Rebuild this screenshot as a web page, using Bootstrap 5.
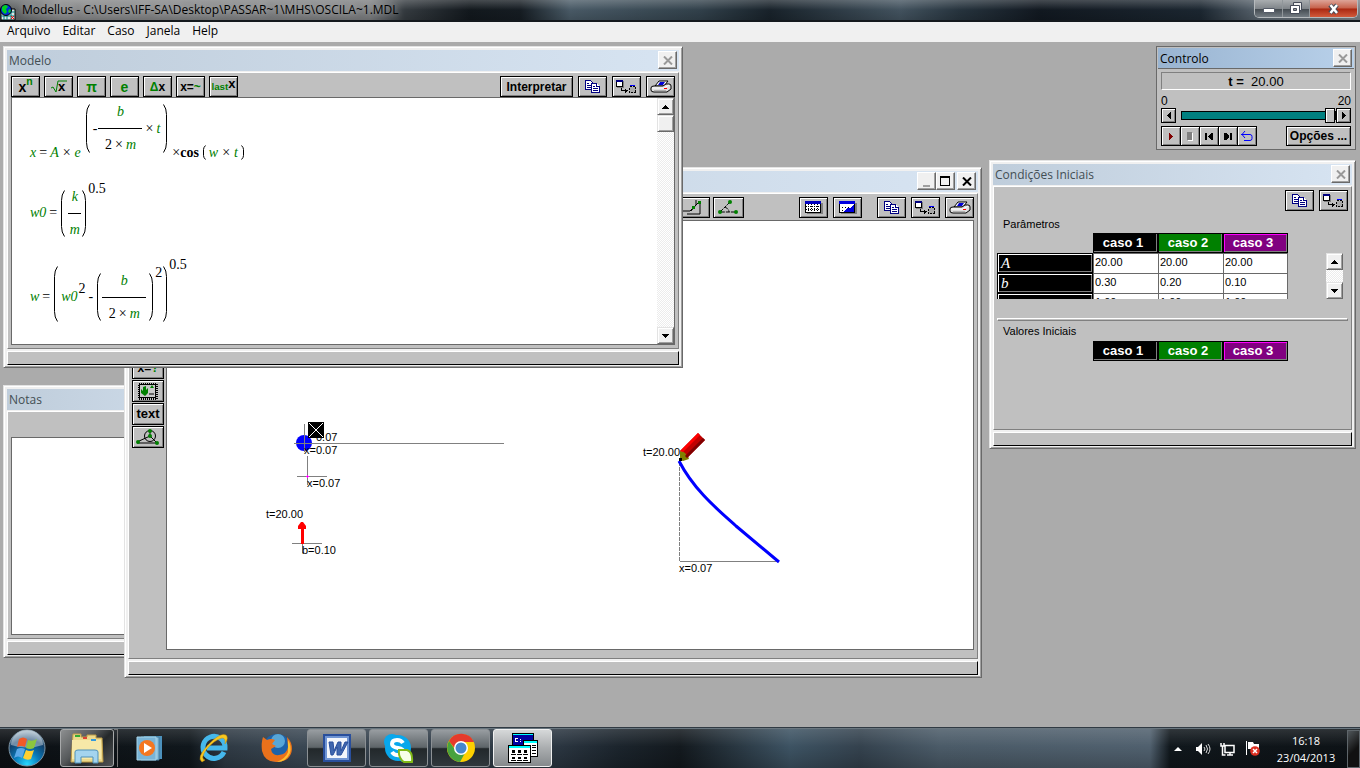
<!DOCTYPE html>
<html lang="pt">
<head>
<meta charset="utf-8">
<meta name="viewport" content="width=device-width, initial-scale=1">
<title>Modellus</title>
<link href="https://cdn.jsdelivr.net/npm/bootstrap@5.3.0/dist/css/bootstrap.min.css" rel="stylesheet">
<style>
:root{--ui:"Open Sans","Noto Sans",sans-serif;--face:#c0c0c0}
body{font-family:"Liberation Sans",Arial,sans-serif;font-size:11px;line-height:14px;color:#000;background:#ababab}
button{font:inherit;color:inherit;padding:0}
svg{display:block;flex:none}
.crisp{shape-rendering:crispEdges}
/* application frame */
.app-title{height:22px;font-family:var(--ui);border-bottom:2px solid #14191d;
 background:linear-gradient(#ffffff38,#0000 50%,#0002),linear-gradient(90deg,#55595b,#858687 60px,#7b7d7f 370px,#343a3f 405px,#12181d 470px,#151c22 520px,#485965 570px,#31404a 700px,#18222a 770px,#42525e 900px,#26333d 960px,#111820 1040px,#1b2630 1200px,#59646e 1260px,#7a8187)}
.app-name{font-size:12px;line-height:20px;margin-left:6px;text-shadow:0 0 6px #ffffff90}
.caption-group{height:18px;margin-right:2px;border:1px solid #b6babd;border-top:0;border-radius:0 0 5px 5px;overflow:hidden}
.caption-group button{width:28px;border:0;border-right:1px solid #90969a;background:linear-gradient(#a9adb0,#80858a 50%,#42494f 52%,#737b82)}
.caption-group .cap-max{width:27px}
.caption-group .cap-close{width:47px;border-right:0;background:linear-gradient(#dda498,#c6604a 48%,#a92711 52%,#d25a3b)}
.app-menu{height:20px;background:#f0f0f0;font-family:var(--ui);font-size:12px;line-height:18px;padding-left:7px;gap:12px}
.app-menu a{color:#000;text-decoration:none}
/* inner windows */
.win{position:absolute;padding:3px 3px 2px;background:#f0f0f0;border:1px solid;border-color:#e3e3e3 #696969 #696969 #e3e3e3;box-shadow:inset 1px 1px #fff,inset -1px -1px #a0a0a0}
.win-bar{height:21px;padding-left:2px;background:linear-gradient(90deg,#bfcddb,#d7e4f2);font-family:var(--ui);font-size:12px;line-height:21px;color:#434e54}
.win-bar button{width:19px;height:18px;margin:1px 2px 0 0;color:#999;background:#f0f0f0;border:1px solid;border-color:#fff #696969 #696969 #fff;box-shadow:inset -1px -1px #a0a0a0}
.w-anim .win-bar button{color:#000}
.win-body{background:var(--face);border:1px solid;border-color:#fff #808080 #808080 #fff;margin-top:1px;padding:3px;min-height:0}
.win-status{height:14px;margin-top:2px;background:var(--face);border:1px solid;border-color:#fff #000 #000 #fff}
.sheet{background:#fff;border:1px solid #696969;min-height:0}
.w-modelo{left:3px;top:4px;width:680px;height:322px;z-index:3}
.w-notas{left:3px;top:343px;width:300px;height:273px}
.w-notas textarea{margin-top:22px;resize:none}
.w-anim{left:124px;top:125px;width:858px;height:511px;z-index:2}
.w-anim .win-body{padding-bottom:8px}
.w-cond{right:4px;top:118px;width:367px;height:289px}
.w-ctl{right:4px;top:4px;width:200px;height:104px;padding:1px;background:var(--face);border:1px solid #696969;box-shadow:none}
.w-ctl .win-bar{color:#000;background:linear-gradient(90deg,#99b4d1,#b9d1ea);border-bottom:1px solid #696969}
/* push buttons */
.tb{display:flex;align-items:center;justify-content:center;width:29px;height:21px;background:var(--face);border:1px solid #000;border-radius:0;box-shadow:inset 1px 1px #fff,inset -1px -1px #808080;font-size:12px;font-weight:700;white-space:nowrap}
.tb-wide{width:31px}
.tb-math{font-size:14px}
.tb-last{align-items:baseline;font-size:13px}
.tools{gap:5px}
.palette .tb{width:32px;height:22px}
.palette{gap:1px;padding-top:137px;margin-right:2px;overflow:hidden}
.grn{color:#008000}
.interp{width:73px}
/* scroll bars */
.sbar{width:17px;background:repeating-conic-gradient(#fff 0 25%,#ececec 0 50%) 0 0/2px 2px}
.sbar button{width:17px;height:17px;display:flex;align-items:center;justify-content:center;background:#f0f0f0;border:1px solid;border-color:#e3e3e3 #696969 #696969 #e3e3e3;box-shadow:inset 1px 1px #fff,inset -1px -1px #a0a0a0}
/* equations */
.maths{font-family:"Liberation Serif",serif;font-size:14px;line-height:16px;padding-left:18px;height:246px;overflow:hidden}
.eq{display:flex;gap:3px}
.eq i{color:#008000}
.op{margin:0 1px}
.tight{margin-left:-2px}
.frac{display:flex;flex-direction:column;align-items:center;width:44px}
.frac>span:first-child{width:100%;text-align:center;padding-bottom:8px;border-bottom:1px solid #000}
.frac>span:last-child{display:flex;gap:3px;padding-top:8px}
.frac-s{width:13px}
.paren{stroke:#000;fill:none}
.tall{margin-bottom:6px}
.pow{padding-bottom:48px}
.pow-lo{padding-bottom:16px}
.pow-hi{padding-bottom:64px}
/* control panel */
.ctl-pad{padding:3px}
.t-box{height:18px;border:1px solid;border-color:#808080 #fff #fff #808080;font-size:13px;line-height:17px}
.scale-ends{font-size:12px;line-height:13px;margin-top:5px}
.ctl-btn{width:15px;height:15px}
.t-range{appearance:none;-webkit-appearance:none;flex:1;min-width:0;height:15px;margin:0 0 0 5px;background:none}
.t-range::-webkit-slider-runnable-track{height:9px;background:#008080;border:1px solid #000}
.t-range::-webkit-slider-thumb{-webkit-appearance:none;width:10px;height:15px;margin-top:-4px;background:var(--face);border:1px solid #000;box-shadow:inset 1px 1px #fff}
.play{padding-top:3px}
.play .tb{width:20px;height:20px;margin-right:-1px}
.play .opts{width:65px;margin:0 0 0 auto}
/* case tables */
.cases{border-collapse:separate;border-spacing:0;table-layout:fixed;margin:0}
.cases th,.cases td{padding:0;font-weight:400}
.cases thead th{height:20px;width:65px;font-weight:700;font-size:13px;text-align:center;padding-right:5px;color:#fff;border:1px solid #000}
.cases .lead-col{width:96px;border:0;background:none}
.c1{background:#000;box-shadow:inset -1px -1px #808080}
.c2{background:#008000;box-shadow:inset -1px -1px #808080}
.c3{background:#800080;box-shadow:inset 1px 1px #f0f,inset -1px -1px #808080}
.cases tbody th{height:20px;background:#000;color:#fff;font:italic 15px/17px "Liberation Serif",serif;border:1px solid #000;box-shadow:inset 1px 1px #fff,inset -1px -1px #808080;padding-left:3px}
.cases tbody td{background:#fff;border:solid #696969;border-width:1px 0 0 1px;padding-left:1px;vertical-align:top;line-height:16px}
.cases tbody td:last-child{border-right-width:1px}
.clip{height:66px;overflow:hidden}
.scroll-sm{height:46px;margin-top:20px;margin-right:5px}
.etch{height:3px;margin-top:19px;border:1px solid;border-color:#fff #808080 #808080 #fff}
.lbl-a{padding:6px 0 2px 6px}
.lbl-b{padding:3px 0 3px 6px}
/* taskbar */
.task{height:40px;color:#fff;font-family:var(--ui);border-top:1px solid #69767f;box-shadow:0 -1px #303a43;z-index:5;
 background:linear-gradient(#ffffff22,#0000 45%,#0003),linear-gradient(90deg,#0c1014,#10171c 190px,#2f3a44 225px,#3a4753 300px,#2a3540 560px,#1b242c 620px,#13191e 680px,#3d5363 790px,#34424e 860px,#4b5b68 940px,#50606e 1150px,#10171c 1170px,#0d1216)}
.task button{display:flex;align-items:center;justify-content:center;height:38px;background:none;border:0}
.task .orb{width:53px}
.task .run{width:59px;margin-right:3px;border:1px solid #8b9094;border-radius:3px;background:linear-gradient(#989da1,#5e6569 48%,#22282b 52%,#30383d)}
.task .explorer{width:54px;margin-left:7px;margin-right:0;background:linear-gradient(135deg,#8d8f90,#55585a 40%,#24282a 60%,#515456);border-color:#a7a9aa}
.task .active{background:linear-gradient(#d6d8d9,#aaadaf 50%,#85898c);border-color:#f0f0f0}
.task .pin{width:63px}
.stack-edge{width:4px;height:38px;border-right:1px solid #777;border-top:1px solid #777}
.task .tray{width:25px}
.clock{font-size:11px;line-height:17px;width:74px}
.task .peek{width:13px;border:1px solid #5f666b;background:linear-gradient(135deg,#50565a,#111 55%)}
</style>
</head>
<body class="vh-100 d-flex flex-column overflow-hidden">

<svg width="0" height="0" class="position-absolute" aria-hidden="true">
 <symbol id="i-copy" viewBox="0 0 15 13"><g class="crisp" fill="#fff" stroke="#000080"><path d="M.5.5h5l2 2v7h-7z"/><path d="M2 3.500h2M2 5.500h4M2 7.500h4"/><path d="M6.500 3.500h5l3 3v6h-8z"/><path d="M11.500 3.500v3h3M8 6.500h2M8 8.500h5M8 10.500h5"/></g></symbol>
 <symbol id="i-send" viewBox="0 0 21 13"><g class="crisp"><path d="M1 1h7v7H1z" fill="#808080"/><path d="M.5.5h6v6h-6z" fill="#fff" stroke="#000"/><path d="M0 0h7v2H0z" fill="#000080"/><path d="M5.500 8v2.500h6M9.500 8.500v4M10.500 9.500v2" stroke="#000" fill="none"/><path d="M13.500 6.500h6v6h-6z" fill="#aaa" stroke="#000" stroke-dasharray="2 1"/><path d="M14 5h5v1h-5z" fill="#00f"/></g></symbol>
 <symbol id="i-print" viewBox="0 0 22 13"><path d="M9 1h9l-4 5H5z" fill="#fff" stroke="#000"/><path d="M10 2h5l-2 3H8z" fill="#0000d8"/><path d="M1 8q0-2 3-2h9l3-2h3q2 0 2 2v3l-4 3H4q-3 0-3-2z" fill="#e0e0e0" stroke="#000"/><path d="M2 8h12l5-3" stroke="#fff" fill="none"/><path d="M14 8h3v1h-3z" fill="red"/><path d="M4 11h12" stroke="#808080"/></symbol>
 <symbol id="i-x" viewBox="0 0 10 9"><path d="M1 .5l8 8M9 .5l-8 8" stroke="currentColor" stroke-width="2"/></symbol>
 <symbol id="i-up" viewBox="0 0 7 4"><path class="crisp" d="M3 0h1v1h1v1h1v1h1v1H0V3h1V2h1V1h1z"/></symbol>
 <symbol id="i-down" viewBox="0 0 7 4"><path class="crisp" d="M0 0h7v1H6v1H5v1H4v1H3V3H2V2H1V1H0z"/></symbol>
 <symbol id="i-left" viewBox="0 0 4 7"><path class="crisp" d="M4 0v7H3V6H2V5H1V4H0V3h1V2h1V1h1V0z"/></symbol>
 <symbol id="i-right" viewBox="0 0 4 7"><path class="crisp" d="M0 0v7h1V6h1V5h1V4h1V3H3V2H2V1H1V0z"/></symbol>
</svg>

<header class="app-title d-flex flex-shrink-0">
 <svg width="16" height="17" viewBox="0 0 16 17" class="mt-1"><path d="M1 5h14v11H1z" fill="#d8e8e8" stroke="#000"/><path d="M1 12h14M8 8h7M11 5v11M7 12v4M4 12v4" stroke="#008080"/><circle cx="6" cy="6" r="5.500" fill="#0030d8" stroke="#000"/><path d="M2 3q4-4 6 0l-2 2 1 3-2 2-3-3zM9 5l2 1-1 3-2-1z" fill="#00d020"/><path d="M11 12l3 3m0-3l-3 3" stroke="red"/></svg>
 <div class="app-name flex-grow-1 text-nowrap">Modellus - C:\Users\IFF-SA\Desktop\PASSAR~1\MHS\OSCILA~1.MDL</div>
 <div class="caption-group d-flex">
  <button aria-label="Minimizar"><svg class="mx-auto" width="12" height="12"><path d="M.5 5.500h11v4H.5z" fill="#fff" stroke="#555b68"/></svg></button>
  <button class="cap-max" aria-label="Restaurar"><svg class="mx-auto" width="13" height="13"><path d="M3.500.5h8v8h-8z" fill="#eee" stroke="#454b58"/><path d="M.5 3.500h9v8h-9z" fill="#fff" stroke="#454b58"/><path d="M3.500 6.500h3v2h-3z" fill="#999" stroke="#454b58"/></svg></button>
  <button class="cap-close" aria-label="Fechar"><svg class="mx-auto" width="14" height="12"><path d="M3 2l7 8M10 2l-7 8" stroke="#454b58" stroke-width="4.500"/><path d="M3.500 2l6.500 8M10 2l-6.500 8" stroke="#fff" stroke-width="2.500"/></svg></button>
 </div>
</header>
<nav class="app-menu d-flex flex-shrink-0"><a href="#">Arquivo</a><a href="#">Editar</a><a href="#">Caso</a><a href="#">Janela</a><a href="#">Help</a></nav>

<main class="position-relative flex-grow-1 overflow-hidden">

<section class="win w-modelo d-flex flex-column">
 <div class="win-bar d-flex"><span class="flex-grow-1">Modelo</span><button aria-label="Fechar"><svg class="mx-auto" width="10" height="9"><use href="#i-x"/></svg></button></div>
 <div class="win-body flex-grow-1 d-flex flex-column">
  <div class="d-flex justify-content-between pb-px">
   <div class="d-flex gap-1">
    <button class="tb tb-math">x<sup class="grn">n</sup></button>
    <button class="tb" aria-label="raiz"><svg width="18" height="13"><path d="M1 8l2-1 3 5L8 1h9" fill="none" stroke="#008000"/><text x="8" y="11" font-size="13" font-weight="700">x</text></svg></button>
    <button class="tb tb-math grn">π</button>
    <button class="tb tb-math grn">e</button>
    <button class="tb"><span class="grn">Δ</span>x</button>
    <button class="tb">x=<span class="grn">~</span></button>
    <button class="tb tb-last"><sub class="grn">last</sub>x</button>
   </div>
   <div class="d-flex tools">
    <button class="tb interp">Interpretar</button>
    <button class="tb" aria-label="Copiar"><svg width="15" height="13"><use href="#i-copy"/></svg></button>
    <button class="tb" aria-label="Enviar"><svg width="21" height="13"><use href="#i-send"/></svg></button>
    <button class="tb" aria-label="Imprimir"><svg width="22" height="13"><use href="#i-print"/></svg></button>
   </div>
  </div>
  <div class="sheet d-flex flex-grow-1">
   <div class="maths flex-grow-1">
    <div class="eq align-items-end" style="padding-top:6px">
     <i>x</i>=<i>A</i><span class="op">×</span><i>e</i>
     <div class="eq align-items-center ps-px" style="padding:0 1px 8px">
      <svg class="paren" width="5" height="49"><path d="M4.500.5q-3 4-3 10v28q0 6 3 10"/></svg>
      <span>-</span><span class="frac tight"><span><i>b</i></span><span><span>2</span><span>×</span><i>m</i></span></span>×<i>t</i>
      <svg class="paren" width="5" height="49"><path d="M.5.5q3 4 3 10v28q0 6-3 10"/></svg>
     </div>
     <span>×<b>cos</b></span>
     <svg class="paren" width="4" height="16"><path d="M3.500.5q-2 2-2 4v6q0 2 2 4"/></svg><i>w</i><span class="op">×</span><i>t</i><svg class="paren" width="4" height="16"><path d="M.5.5q2 2 2 4v6q0 2-2 4"/></svg>
    </div>
    <div class="eq align-items-center" style="padding-top:20px">
     <i>w0</i>=
     <svg class="paren" width="5" height="47"><path d="M4.500.5q-3 4-3 10v26q0 6 3 10"/></svg>
     <span class="frac frac-s"><span><i>k</i></span><span><i>m</i></span></span>
     <svg class="paren tight" width="5" height="47"><path d="M.5.5q3 4 3 10v26q0 6-3 10"/></svg>
     <span class="pow tight">0.5</span>
    </div>
    <div class="eq align-items-center" style="padding-top:12px">
     <i>w</i>=
     <svg class="paren tall" width="5" height="56"><path d="M4.500.5q-3 4-3 10v35q0 6 3 10"/></svg>
     <i>w0</i><span class="pow-lo tight">2</span><span>-</span>
     <svg class="paren" width="5" height="48"><path d="M4.500.5q-3 4-3 10v27q0 6 3 10"/></svg>
     <span class="frac tight"><span><i>b</i></span><span><span>2</span><span>×</span><i>m</i></span></span>
     <svg class="paren" width="5" height="48"><path d="M.5.5q3 4 3 10v27q0 6-3 10"/></svg>
     <span class="pow tight">2</span>
     <svg class="paren tall tight" width="5" height="56"><path d="M.5.5q3 4 3 10v35q0 6-3 10"/></svg>
     <span class="pow-hi tight">0.5</span>
    </div>
    <div class="eq" style="padding:5px 0 0 94px"><i>b</i></div>
   </div>
   <div class="sbar d-flex flex-column">
    <button aria-label="Subir"><svg width="7" height="4"><use href="#i-up"/></svg></button><button aria-label="Posição"></button>
    <button class="mt-auto" aria-label="Descer"><svg width="7" height="4"><use href="#i-down"/></svg></button>
   </div>
  </div>
 </div>
 <div class="win-status"></div>
</section>

<section class="win w-notas d-flex flex-column">
 <div class="win-bar"><label for="notas">Notas</label></div>
 <div class="win-body flex-grow-1 d-flex"><textarea id="notas" class="sheet flex-grow-1"></textarea></div>
 <div class="win-status"></div>
</section>

<section class="win w-anim d-flex flex-column">
 <div class="win-bar d-flex justify-content-end">
  <button class="me-0" aria-label="Minimizar"><svg width="17" height="14"><path d="M5 12h7" stroke="#a0a0a0" stroke-width="2"/></svg></button>
  <button aria-label="Maximizar"><svg width="17" height="16"><path class="crisp" d="M3.500 3.500h9v9h-9zM3 4.500h10" fill="none" stroke="#000"/></svg></button>
  <button aria-label="Fechar"><svg class="mx-auto" width="10" height="9"><use href="#i-x"/></svg></button>
 </div>
 <div class="win-body flex-grow-1 d-flex flex-column">
  <div class="d-flex justify-content-end tools" style="padding-bottom:2px">
   <button class="tb tb-wide" aria-label="Declive" style="margin-right:-2px"><svg width="25" height="16"><path d="M1 11h7l9-9M18 2v12H5M9 11l5-6V0" fill="none" stroke="#000"/><path d="M16 1h3v3h-3zM10 6h3v3h-3z" fill="#008000"/></svg></button>
   <button class="tb tb-wide" aria-label="Ângulo" style="margin-right:50px"><svg width="21" height="15"><path d="M12 2L2 12h16M7 7q4 2 4 5" fill="none" stroke="#000" stroke-dasharray="4 1"/><g fill="#008000"><circle cx="12" cy="2" r="2"/><circle cx="2" cy="12" r="2"/><circle cx="18" cy="12" r="2"/></g></svg></button>
   <button class="tb" aria-label="Tabela"><svg width="18" height="13" class="crisp"><path d="M2 2h16v11H2z" fill="#808080"/><path d="M.5.5h15v11H.5z" fill="#fff" stroke="#000"/><path d="M1 5.500h14M1 8.500h14M3.500 3v9M6.500 3v9M9.500 3v9M12.500 3v9" stroke="#000" stroke-dasharray="1 1"/><path d="M0 0h16v3H0z" fill="#0000c0"/></svg></button>
   <button class="tb" aria-label="Gráfico" style="margin-right:10px"><svg width="18" height="13" class="crisp"><path d="M2 2h16v11H2z" fill="#808080"/><path d="M.5.5h15v11H.5z" fill="#fff" stroke="#000"/><path d="M3 6h1M6 6h1M3 9h1M9 6h1" stroke="#000"/><path d="M0 0h16v3H0zM4 11l5-4h3l3-4v8z" fill="#0000e0"/></svg></button>
   <button class="tb" aria-label="Copiar"><svg width="15" height="13"><use href="#i-copy"/></svg></button>
   <button class="tb" aria-label="Enviar"><svg width="21" height="13"><use href="#i-send"/></svg></button>
   <button class="tb" aria-label="Imprimir"><svg width="22" height="13"><use href="#i-print"/></svg></button>
  </div>
  <div class="d-flex flex-grow-1" style="min-height:0">
   <div class="palette d-flex flex-column">
    <button class="tb">x=<span class="grn">?</span></button>
    <button class="tb" aria-label="Imagem"><svg width="22" height="18"><path class="crisp" d="M1.500 1.500h18v15h-18z" fill="none" stroke="#000" stroke-width="2" stroke-dasharray="1 1"/><path class="crisp" d="M2.500 2.500h16v13h-16z" fill="#c8c8c8" stroke="#000"/><path d="M4 7l2 2V5l3-1v4l2-2v5l-3 3-4-3zM13 6l2-3 2 3z" fill="#008000"/><path d="M12 12h5" stroke="#000"/></svg></button>
    <button class="tb" style="font-size:13px">text</button>
    <button class="tb" aria-label="Geometria"><svg width="24" height="17"><g fill="none" stroke="#000"><circle cx="14" cy="7" r="5.500"/><path d="M1 13l13-6 7 7H1M14 7V1"/></g><g fill="#008000"><circle cx="2" cy="13" r="2"/><circle cx="14" cy="7" r="2"/><circle cx="14" cy="2" r="2"/><circle cx="21" cy="14" r="2"/></g></svg></button>
   </div>
   <div class="sheet flex-grow-1 overflow-hidden">
    <svg width="806" height="428" viewBox="167 221 806 428" font-size="11">
     <g class="crisp" fill="none" stroke="#808080"><path d="M294 443.500h210M304.500 424v28M307.500 456v29M297 476.500h30"/><path d="M292 543.500h30M302.500 543v10M679.500 561.500h99"/><path d="M679.500 462v99" stroke-dasharray="4 1"/></g>
     <circle cx="304" cy="443" r="8" fill="#00f"/><path class="crisp" d="M296 443.500h16M304.500 435v16" stroke="#808080"/>
     <text x="316" y="441">0.07</text><text x="304" y="454">x=0.07</text>
     <path class="crisp" d="M306 476.500h3M307.500 475v3" stroke="#f0f"/>
     <path d="M308 422h16v16h-16z"/><path d="M309 423l14 14M323 423l-14 14" stroke="#fff" fill="none"/>
     <text x="307" y="487">x=0.07</text><text x="266" y="518">t=20.00</text><text x="302" y="554">b=0.10</text>
     <path d="M301 544v-15h-3v-3l3-4h2l3 4v3h-2v15z" fill="red"/>
     <text x="643" y="456">t=20.00</text><text x="679" y="572">x=0.07</text>
     <path d="M679 461C694 490 717 509 736 526Q760 546 779 562" fill="none" stroke="#00f" stroke-width="3"/>
     <path d="M680 460v-9l7 1 2 7-6 2z" fill="#808000"/><path d="M680 451l18-18 7 7-18 18q0-6-7-7z" fill="#c00000"/><path d="M680 451l18-18 2 2-17 17z" fill="red"/><path d="M686 457l18-18" stroke="#800000" stroke-width="3"/><path d="M679 458h3v3h-3z"/>
    </svg>
   </div>
  </div>
 </div>
 <div class="win-status"></div>
</section>

<section class="win w-ctl">
 <div class="win-bar d-flex"><span class="flex-grow-1">Controlo</span><button aria-label="Fechar"><svg class="mx-auto" width="10" height="9"><use href="#i-x"/></svg></button></div>
 <div class="ctl-pad">
  <div class="t-box text-center"><b>t =</b>&nbsp; 20.00</div>
  <div class="scale-ends d-flex justify-content-between"><span>0</span><span>20</span></div>
  <div class="d-flex">
   <button class="tb ctl-btn" aria-label="Recuar"><svg width="4" height="7"><use href="#i-left"/></svg></button>
   <input type="range" class="t-range" min="0" max="20" value="20" aria-label="t">
   <button class="tb ctl-btn" aria-label="Avançar"><svg width="4" height="7"><use href="#i-right"/></svg></button>
  </div>
  <div class="play d-flex">
   <button class="tb" aria-label="Iniciar"><svg width="4" height="7" fill="#800000"><use href="#i-right"/></svg></button>
   <button class="tb" aria-label="Parar"><svg width="6" height="9"><path d="M1 1h5v8H1z" fill="#fff"/><path d="M0 0h5v8H0z" fill="#808080"/></svg></button>
   <button class="tb" aria-label="Início"><svg width="8" height="7"><path class="crisp" d="M0 0h2v7H0zM6 0h2v7H6L3 4V3z"/></svg></button>
   <button class="tb" aria-label="Fim"><svg width="8" height="7"><path class="crisp" d="M6 0h2v7H6zM0 0h2l3 3v1L2 7H0z"/></svg></button>
   <button class="tb" aria-label="Repetir"><svg width="12" height="11"><path d="M0 3.500h9q2 0 2 2v2q0 2-2 2H3M4 0L1 3.500 4 7" fill="none" stroke="#00f"/></svg></button>
   <button class="tb opts">Opções ...</button>
  </div>
 </div>
</section>

<section class="win w-cond d-flex flex-column">
 <div class="win-bar d-flex"><span class="flex-grow-1">Condições Iniciais</span><button aria-label="Fechar"><svg class="mx-auto" width="10" height="9"><use href="#i-x"/></svg></button></div>
 <div class="win-body flex-grow-1">
  <div class="d-flex justify-content-end tools">
   <button class="tb" aria-label="Copiar"><svg width="15" height="13"><use href="#i-copy"/></svg></button>
   <button class="tb" aria-label="Enviar"><svg width="21" height="13"><use href="#i-send"/></svg></button>
  </div>
  <div class="lbl-a">Parâmetros</div>
  <div class="d-flex justify-content-between">
   <div class="clip">
    <table class="cases">
     <thead><tr><td class="lead-col"></td><th class="c1">caso 1</th><th class="c2">caso 2</th><th class="c3">caso 3</th></tr></thead>
     <tbody><tr><th>A</th><td>20.00</td><td>20.00</td><td>20.00</td></tr><tr><th>b</th><td>0.30</td><td>0.20</td><td>0.10</td></tr><tr><th></th><td>1.00</td><td>1.00</td><td>1.00</td></tr></tbody>
    </table>
   </div>
   <div class="sbar scroll-sm d-flex flex-column justify-content-between">
    <button aria-label="Subir"><svg width="7" height="4"><use href="#i-up"/></svg></button><button aria-label="Descer"><svg width="7" height="4"><use href="#i-down"/></svg></button>
   </div>
  </div>
  <div class="etch"></div>
  <div class="lbl-b">Valores Iniciais</div>
  <table class="cases"><thead><tr><td class="lead-col"></td><th class="c1">caso 1</th><th class="c2">caso 2</th><th class="c3">caso 3</th></tr></thead></table>
 </div>
 <div class="win-status"></div>
</section>
</main>

<footer class="task d-flex flex-shrink-0 position-relative">
 <button class="orb" aria-label="Iniciar"><svg width="40" height="38" viewBox="0 0 40 38"><defs><radialGradient id="orb" cx=".5" cy=".95" r=".9"><stop offset="0" stop-color="#28d8ff"/><stop offset=".4" stop-color="#0878b8"/><stop offset=".75" stop-color="#12406a"/><stop offset="1" stop-color="#8ba5b8"/></radialGradient></defs><circle cx="20" cy="19" r="18" fill="url(#orb)" stroke="#7e95a5"/><path d="M4 16a16 15 0 0 1 32 0q-16 5-32 0z" fill="#fff" opacity=".4"/><path d="M12 10q4-3 8 0l-2 8q-4-2-8 0z" fill="#f05a28"/><path d="M21 11q4 2 9-1l-3 9q-4 2-8 0z" fill="#8cc63e"/><path d="M10 20q4-2 8 0l-3 9q-4-3-8 0z" fill="#5aa8e8"/><path d="M19 21q4 2 8 0l-3 9q-4 2-8-1z" fill="#ffd030"/></svg></button>
 <button class="run explorer" aria-label="Explorador"><svg width="34" height="32"><path d="M3 2h8v3h6V3h9v3h6l1 24H1z" fill="#ecd98c" stroke="#bd9c47"/><path d="M2 8h29v19H2z" fill="#f6e8a8"/><path d="M5 3h5v2H5z" fill="#3a3"/><path d="M13 5h4v2h-4z" fill="#d43"/><path d="M21 7h5v2h-5z" fill="#39d"/><path d="M5 31V20q0-2 3-2h17q3 0 3 2v11h-5v-6H11v6z" fill="#a4d4ee" stroke="#4f91b9"/></svg></button>
 <div class="stack-edge"></div>
 <button class="pin" aria-label="Media Player"><svg width="27" height="27"><path d="M8 1h18v23H8z" fill="#4c91bc"/><path d="M5 2h18v23H5z" fill="#8cc1dd" stroke="#427da1"/><path d="M1 2h19v23H1z" fill="#79b4d7" stroke="#a9d5e9"/><circle cx="11" cy="13" r="8" fill="#f47721"/><path d="M8 8l8 5-8 5z" fill="#fff"/></svg></button>
 <button class="pin" aria-label="Internet Explorer"><svg width="32" height="32"><path d="M27 20A11 11 0 1 1 28 16H10" fill="none" stroke="#45b8ec" stroke-width="5"/><path d="M5 30Q-1 26 11 13 23 0 29 3q3 3-1 9 1-6-3-6Q17 8 9 18 3 27 8 28z" fill="#f8c820" stroke="#c98d08" stroke-width=".5"/></svg></button>
 <button class="pin" aria-label="Firefox"><svg width="32" height="32"><circle cx="17" cy="16" r="14" fill="#1d62a9"/><circle cx="18" cy="9" r="7" fill="#57a6d7"/><path d="M3 5l4 3q4-2 8 0l-3 4 4 2-5 3q1 7 8 6 8-1 9-8l-1-10q5 5 5 12-1 12-14 13Q5 31 2 19q-1-8 1-14z" fill="#e9711b"/><path d="M28 8q4 6 2 13-4 9-13 9 9-4 11-10z" fill="#ffc02e"/></svg></button>
 <button class="run" aria-label="Word"><svg width="28" height="28"><path d="M1 1h26v26H1z" fill="#7095d3" stroke="#294f9c" stroke-width="2"/><path d="M4 4h20v20H4z" fill="#f3f6fb"/><path d="M6 8h4l1 9 4-9h3v9l4-9h3l-7 13h-4v-8l-4 8H8z" fill="#3f66ae" stroke="#294f9c"/></svg></button>
 <button class="run" aria-label="Skype"><svg width="31" height="31"><circle cx="15" cy="15" r="13" fill="#08a7ec"/><circle cx="9" cy="9" r="8" fill="#08a7ec"/><circle cx="21" cy="22" r="7" fill="#08a7ec"/><path d="M20 10q-2-3-6-3-5 0-5 4 0 3 6 4t5 4q-1 4-6 3-3 0-5-3" fill="none" stroke="#fff" stroke-width="4"/><path d="M16 17h8q6 2 5 12h-8q-6-4-5-12z" fill="#f8ffe8" stroke="#80b918" stroke-width="2"/></svg></button>
 <button class="run" aria-label="Chrome"><svg width="30" height="30"><circle cx="15" cy="15" r="14" fill="#fdd000"/><path d="M3 8A14 14 0 0 1 28 9H15L10 17z" fill="#e53a2c"/><path d="M3 8l7 10 9 2-5 9A14 14 0 0 1 3 8z" fill="#48a23f"/><circle cx="15" cy="15" r="7" fill="#fff"/><circle cx="15" cy="15" r="5.500" fill="#4687ce"/></svg></button>
 <button class="run active" aria-label="Modellus"><svg width="30" height="30" class="crisp"><path d="M4.500.5h21v13h-21z" fill="#0000a0" stroke="#000"/><path d="M5 1h20v1H5z" fill="#0ff"/><path d="M10 5.500H7.500v3H10M12 6h1M12 8.500h1" stroke="#fff" fill="none"/><path d="M15.500 7.500h14v16h-14z" fill="#fff" stroke="#000"/><path d="M16 8h13v2H16z" fill="#0ff"/><path d="M24 12.500h4M24 14.500h4M24 17.500h4M24 20.500h4" stroke="#000"/><path d="M.5 12.500h22v17H.5z" fill="#fff" stroke="#000"/><path d="M1 13h21v2H1z" fill="#0ff"/><path d="M4 17h3v3H4zM10 17h3v3h-3zM16 17h3v3h-3zM4 24h3v2H4zM10 24h3v2h-3zM16 24h3v2h-3z"/><path d="M3 21.500h5M9 21.500h5M15 21.500h5M3 27.500h5M9 27.500h5M15 27.500h5" stroke="#000"/></svg></button>
 <div class="ms-auto d-flex align-items-center">
  <button class="tray" aria-label="Mostrar ícones"><svg width="8" height="4"><path d="M4 0l4 4H0z" fill="#fff"/></svg></button>
  <button class="tray" aria-label="Volume"><svg width="16" height="14"><path d="M1 5h2l4-4v12L3 9H1z" fill="#fff"/><path d="M9 5q2 2 0 4M11 3q3 4 0 8M13 2q4 5 0 10" fill="none" stroke="#ddd"/></svg></button>
  <button class="tray" aria-label="Rede"><svg width="15" height="14"><path d="M5 3.500h9v7H5zM7 13h6M10 10v3M1 1v3h3V1M2.500 4v9h3" fill="none" stroke="#fff" stroke-width="1.500"/></svg></button>
  <button class="tray" aria-label="Ações"><svg width="16" height="15"><path d="M1.500 0v14" stroke="#fff"/><path d="M3 1h5l1 2h5v5H3z" fill="#fff"/><circle cx="10" cy="10" r="4.800" fill="#dc2f21"/><path d="M8 8l4 4m0-4l-4 4" stroke="#fff" stroke-width="1.500"/></svg></button>
  <div class="clock text-center ms-1">16:18<br>23/04/2013</div>
  <button class="peek ms-1" aria-label="Mostrar ambiente de trabalho"></button>
 </div>
</footer>
<script src="https://cdn.jsdelivr.net/npm/bootstrap@5.3.0/dist/js/bootstrap.bundle.min.js"></script>
</body>
</html>
